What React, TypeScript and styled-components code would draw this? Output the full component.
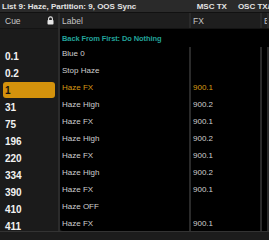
import React from 'react'
import styled, { createGlobalStyle } from 'styled-components'

const GlobalStyle = createGlobalStyle`
  html, body {
    margin: 0;
    padding: 0;
    background: #1a1a1a;
  }
  * {
    box-sizing: border-box;
  }
`

type Row = { cue: string; label: string; fx?: string; active?: boolean }

const rows: Row[] = [
  { cue: '0.1', label: 'Blue 0' },
  { cue: '0.2', label: 'Stop Haze' },
  { cue: '1', label: 'Haze FX', fx: '900.1', active: true },
  { cue: '31', label: 'Haze High', fx: '900.2' },
  { cue: '75', label: 'Haze FX', fx: '900.1' },
  { cue: '196', label: 'Haze High', fx: '900.2' },
  { cue: '220', label: 'Haze FX', fx: '900.1' },
  { cue: '334', label: 'Haze High', fx: '900.2' },
  { cue: '390', label: 'Haze FX', fx: '900.1' },
  { cue: '410', label: 'Haze OFF' },
  { cue: '411', label: 'Haze FX', fx: '900.1' },
]

const LockIcon = () => (
  <svg width="7" height="9" viewBox="0 0 7 9">
    <path d="M1.6 4V2.8a1.9 1.9 0 0 1 3.8 0V4" fill="none" stroke="#e6e6e6" strokeWidth="1.1" />
    <rect x="0.5" y="4" width="6" height="4.6" rx="0.8" fill="#e6e6e6" />
  </svg>
)

const App: React.FunctionComponent = () => {
  return (
    <Frame>
      <GlobalStyle />
      <TitleBar>
        <TitleText>List 9: Haze, Partition: 9, OOS Sync</TitleText>
        <TitleRight>
          <span>MSC TX</span>
          <span>OSC TX/RX</span>
        </TitleRight>
      </TitleBar>
      <Body>
        <CueColumn>
          <CueHeader>
            <span>Cue</span>
            <LockIcon />
          </CueHeader>
          <CueSpacer />
          {rows.map((r, i) => (
            <CueCell key={i}>
              <CueBadge $active={r.active}>{r.cue}</CueBadge>
            </CueCell>
          ))}
        </CueColumn>
        <Table>
          <HeaderRow>
            <HeadCell $width={131}>Label</HeadCell>
            <HeadCell $width={71}>FX</HeadCell>
            <HeadCell>Ex</HeadCell>
          </HeaderRow>
          <BackRow>Back From First: Do Nothing</BackRow>
          {rows.map((r, i) => (
            <DataRow key={i}>
              <DataCell $width={131} $active={r.active}>{r.label}</DataCell>
              <DataCell $width={71} $active={r.active}>{r.fx}</DataCell>
              <DataCell />
            </DataRow>
          ))}
        </Table>
      </Body>
      <Footer />
    </Frame>
  )
}

const Frame = styled.div`
  width: 269px;
  height: 240px;
  overflow: hidden;
  display: flex;
  flex-direction: column;
  background: #1a1a1a;
  font-family: 'Liberation Sans', Arial, sans-serif;
`

const TitleBar = styled.div`
  height: 13px;
  flex: none;
  display: flex;
  align-items: center;
  justify-content: space-between;
  padding-left: 2px;
  background: #2a2a2a;
  border-bottom: 1px solid #111;
  color: #e4e4e4;
  font-size: 8px;
  font-weight: bold;
  white-space: nowrap;
`

const TitleText = styled.span``

const TitleRight = styled.div`
  display: flex;
  gap: 11px;
  margin-right: -12px;
`

const Body = styled.div`
  height: 218px;
  flex: none;
  display: flex;
  overflow: hidden;
`

const CueColumn = styled.div`
  width: 60px;
  flex: none;
  background: #1b1b1b;
  border-right: 2px solid #2b2b2b;
`

const CueHeader = styled.div`
  height: 16px;
  display: flex;
  align-items: center;
  justify-content: space-between;
  padding: 0 4px 0 5px;
  background: #1e1e1e;
  border-bottom: 1px solid #141414;
  color: #c8c8c8;
  font-size: 8.5px;
`

const CueSpacer = styled.div`
  height: 18px;
`

const CueCell = styled.div`
  height: 17px;
  padding: 0 3px;
  display: flex;
  align-items: center;
`

const CueBadge = styled.div<{ $active?: boolean }>`
  width: 100%;
  height: 16px;
  display: flex;
  align-items: center;
  padding: 2px 0 0 2px;
  border-radius: 3px;
  background: ${p => (p.$active ? '#d4920c' : 'transparent')};
  color: ${p => (p.$active ? '#111' : '#f2f2f2')};
  font-size: 10px;
  font-weight: bold;
`

const Table = styled.div`
  flex: 1;
  background: #000;
  border-bottom-left-radius: 3px;
  overflow: hidden;
`

const HeaderRow = styled.div`
  height: 16px;
  display: flex;
  background: #1e1e1e;
  border-bottom: 1px solid #141414;
`

const HeadCell = styled.div<{ $width?: number }>`
  width: ${p => (p.$width ? `${p.$width}px` : 'auto')};
  flex: ${p => (p.$width ? 'none' : '1')};
  display: flex;
  align-items: center;
  padding-left: 2px;
  border-right: 2px solid #2a2a2a;
  color: #c4c4c4;
  font-size: 8.5px;
  white-space: nowrap;
  overflow: hidden;
`

const BackRow = styled.div`
  height: 18px;
  display: flex;
  align-items: center;
  padding-left: 2px;
  color: #22a39a;
  font-size: 7.5px;
  letter-spacing: -0.1px;
  font-weight: bold;
  white-space: nowrap;
`

const DataRow = styled.div`
  height: 17px;
  display: flex;
`

const DataCell = styled.div<{ $width?: number; $active?: boolean }>`
  width: ${p => (p.$width ? `${p.$width}px` : 'auto')};
  flex: ${p => (p.$width ? 'none' : '1')};
  padding: 1px 0 0 2px;
  line-height: 12px;
  border-right: 2px solid #2a2a2a;
  color: ${p => (p.$active ? '#d99a14' : '#cfcfcf')};
  font-size: 8px;
  white-space: nowrap;
  overflow: hidden;
`

const Footer = styled.div`
  flex: 1;
  background: #1c1c1c;
  border-top: 1px solid #333;
`

export default App
